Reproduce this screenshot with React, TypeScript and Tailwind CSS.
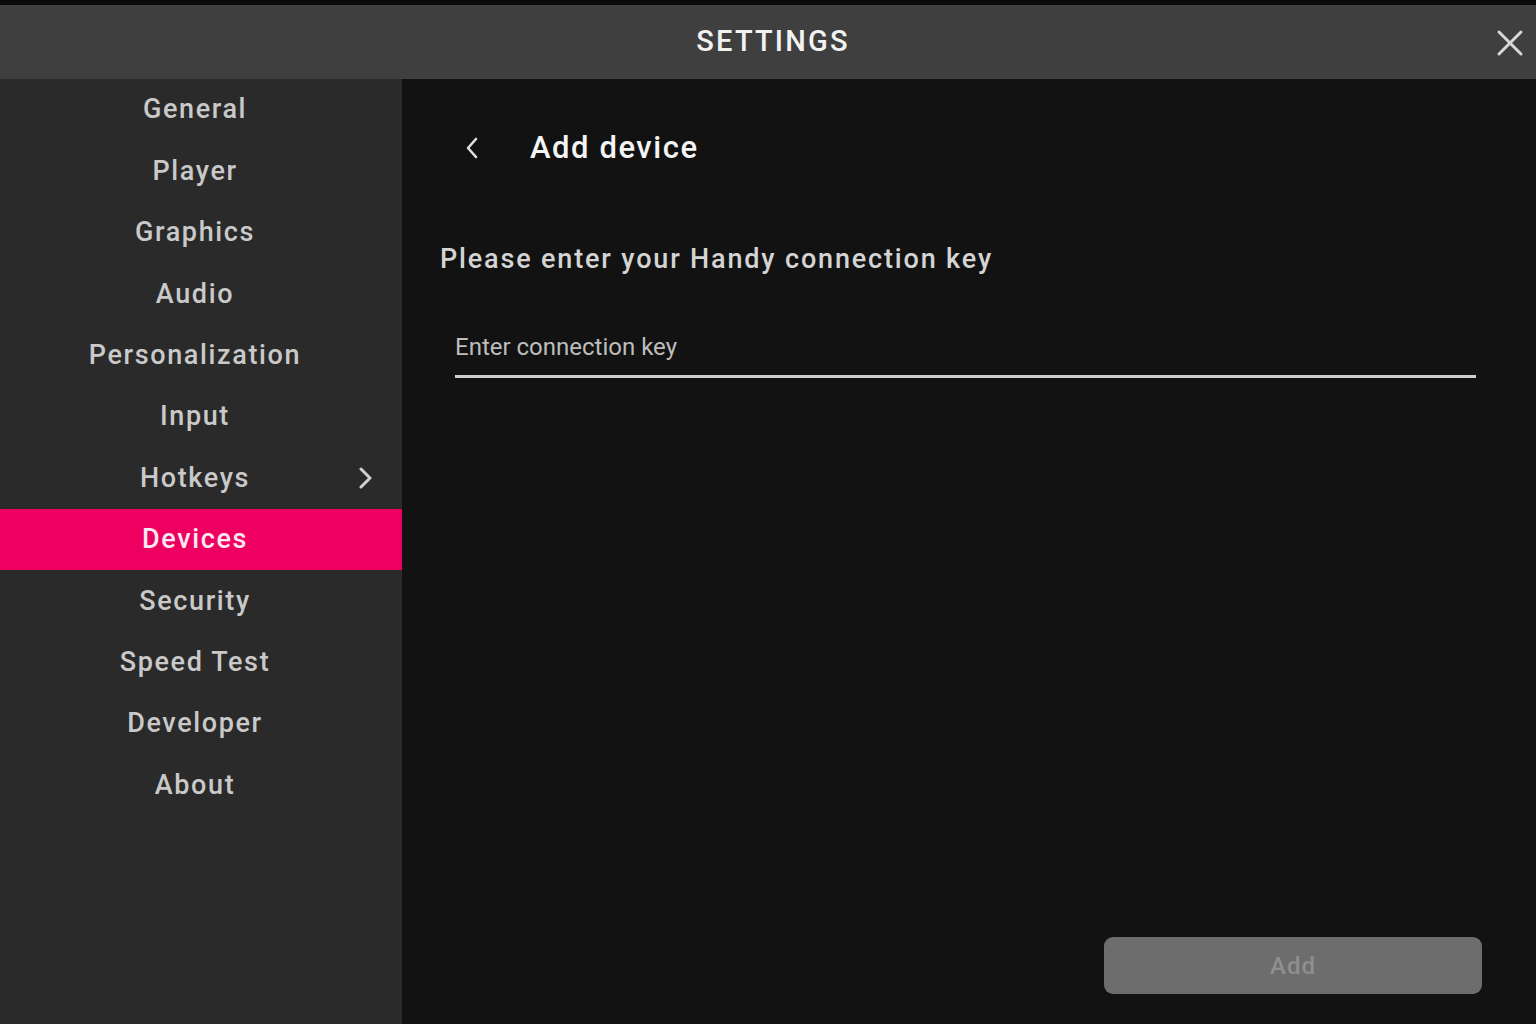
import React from "react";

const items = [
  "General",
  "Player",
  "Graphics",
  "Audio",
  "Personalization",
  "Input",
  "Hotkeys",
  "Devices",
  "Security",
  "Speed Test",
  "Developer",
  "About",
];

export default function App() {
  return (
    <div
      className="w-[1536px] h-[1024px] flex flex-col bg-[#121212] overflow-hidden"
      style={{ fontFamily: "Roboto, 'Noto Sans', sans-serif" }}
    >
      <div className="h-[5px] bg-[#0a0a0c] shrink-0" />
      <div className="h-[74px] shrink-0 bg-[#3f3f3f] relative flex items-center justify-center">
        <span className="text-[29px] font-medium tracking-[0.075em] text-[#f2f2f2] ml-[10px]">SETTINGS</span>
        <button className="absolute right-[12px] top-[24px] text-[#d8d8d8]">
          <svg width="28" height="28" viewBox="0 0 28 28" fill="none" stroke="currentColor" strokeWidth="3" strokeLinecap="round">
            <path d="M3 3 L25 25 M25 3 L3 25" />
          </svg>
        </button>
      </div>
      <div className="flex flex-1 min-h-0">
        <div className="w-[402px] shrink-0 bg-[#2a2a2a] flex flex-col">
          {items.map((it) => {
            const active = it === "Devices";
            return (
              <div
                key={it}
                className={`h-[61.4px] shrink-0 flex items-center justify-center relative text-[27px] font-medium tracking-[0.06em] ${
                  active ? "bg-[#ee0060] text-[#fbe8f0]" : "text-[#c9c9c9]"
                }`}
              >
                <span className="-ml-[12px]">{it}</span>
                {it === "Hotkeys" && (
                  <svg
                    className="absolute left-[357px] top-[20px]"
                    width="18"
                    height="22"
                    viewBox="0 0 18 22"
                    fill="none"
                    stroke="#d0d0d0"
                    strokeWidth="3"
                    strokeLinecap="round"
                    strokeLinejoin="round"
                  >
                    <path d="M4 2 L13 11 L4 20" />
                  </svg>
                )}
              </div>
            );
          })}
        </div>
        <div className="flex-1 flex flex-col pl-[38px] pr-[54px] pb-[30px]">
          <div className="flex items-center h-[72px] mt-[33px]">
            <svg width="16" height="24" viewBox="0 0 16 24" fill="none" stroke="#e0e0e0" strokeWidth="2.6" strokeLinecap="round" strokeLinejoin="round" className="ml-[24px]">
              <path d="M12 3 L4 12 L12 21" />
            </svg>
            <span className="ml-[50px] text-[31px] font-medium tracking-[0.05em] text-[#f4f4f4]">Add device</span>
          </div>
          <div className="mt-[58px] text-[27px] font-medium tracking-[0.068em] text-[#d4d4d4] leading-[34px]">
            Please enter your Handy connection key
          </div>
          <div className="mt-[53px] ml-[15px] mr-[6px] border-b-[3px] border-[#cfcfcf] pb-[10px]">
            <span className="text-[24px] text-[#bdbdbd]">Enter connection key</span>
          </div>
          <div className="flex-1" />
          <div className="flex justify-end">
            <button className="w-[378px] h-[57px] rounded-[9px] bg-[#6d6d6d] text-[#8f8f8f] text-[24px] font-medium tracking-[0.04em]">
              Add
            </button>
          </div>
        </div>
      </div>
    </div>
  );
}
